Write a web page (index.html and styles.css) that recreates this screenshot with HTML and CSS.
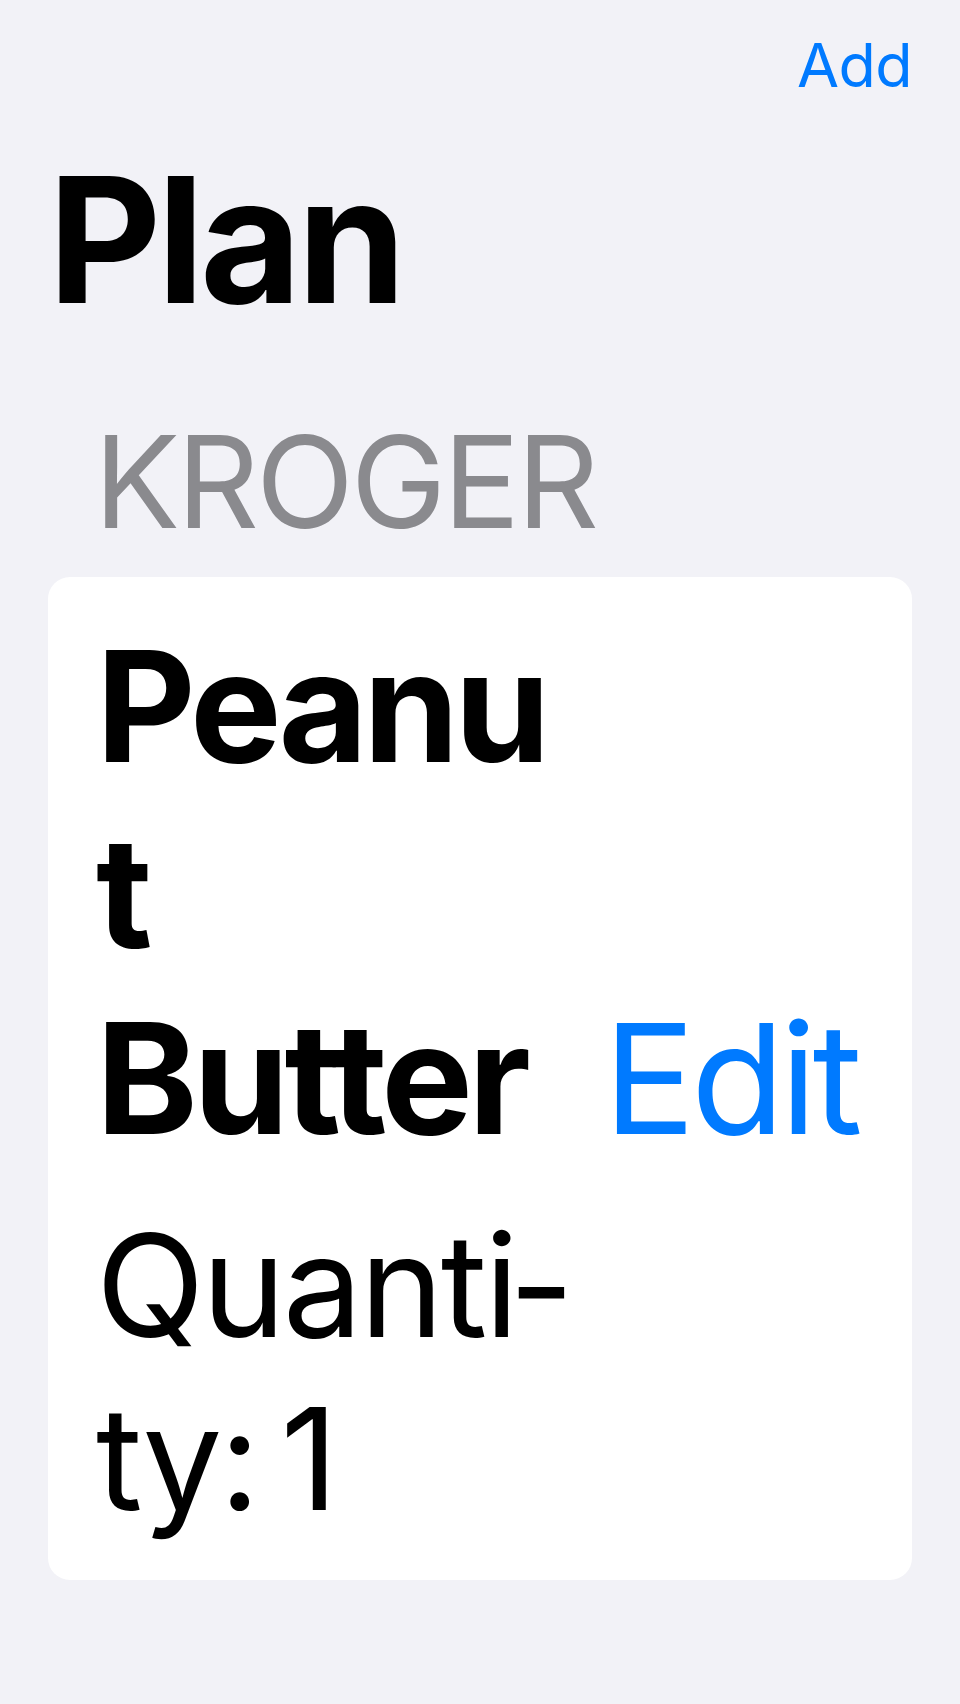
FILE: index.html
```html
<!DOCTYPE html>
<html lang="en">
<head>
<meta charset="utf-8">
<title>Plan</title>
<link rel="stylesheet" href="styles.css">
</head>
<body>
<div class="screen">
  <header class="navbar">
    <button class="nav-btn" type="button">Add</button>
  </header>
  <h1 class="title">Plan</h1>
  <section class="section">
    <h2 class="section-header">KROGER</h2>
    <div class="card">
      <div class="row">
        <div class="item-info">
          <div class="item-name">Peanut Butter</div>
          <div class="item-qty">Quanti&shy;ty: 1</div>
        </div>
        <button class="edit-btn" type="button">Edit</button>
      </div>
    </div>
  </section>
</div>
</body>
</html>
```
FILE: styles.css
```css
html, body {
  margin: 0;
  padding: 0;
  background: #f2f2f7;
}
body {
  font-family: Inter, Roboto, "Liberation Sans", sans-serif;
  color: #000;
}
.screen {
  width: 960px;
  min-height: 1704px;
  box-sizing: border-box;
  padding: 28px 48px 0 48px;
}
.navbar {
  display: flex;
  justify-content: flex-end;
}
button {
  font-family: inherit;
  background: none;
  border: 0;
  padding: 0;
  margin: 0;
  cursor: pointer;
}
.nav-btn {
  font-size: 61px;
  line-height: 74px;
  letter-spacing: -0.01em;
  color: #007aff;
}
.title {
  margin: 31px 0 0 0;
  font-size: 175px;
  font-weight: 700;
  line-height: 212px;
  letter-spacing: -0.025em;
}
.section {
  margin-top: 59px;
}
.section-header {
  margin: 0 0 18px 46px;
  font-size: 128px;
  font-weight: 400;
  line-height: 155px;
  letter-spacing: -0.025em;
  color: #8a8a8e;
}
.card {
  background: #fff;
  border-radius: 22px;
  padding: 36px 48px 35px 48px;
}
.row {
  display: flex;
  align-items: center;
  gap: 20px;
}
.item-info {
  flex: 1;
  min-width: 0;
  display: flex;
  flex-direction: column;
  gap: 28px;
}
.item-name {
  font-size: 154px;
  font-weight: 700;
  line-height: 186px;
  letter-spacing: -0.03em;
  overflow-wrap: anywhere;
}
.item-qty {
  font-size: 142px;
  line-height: 173px;
  letter-spacing: -0.02em;
  word-spacing: -14px;
  hyphens: manual;
}
.edit-btn {
  flex: none;
  margin-right: 6px;
  font-size: 153px;
  line-height: 186px;
  letter-spacing: -0.03em;
  color: #007aff;
}
```
